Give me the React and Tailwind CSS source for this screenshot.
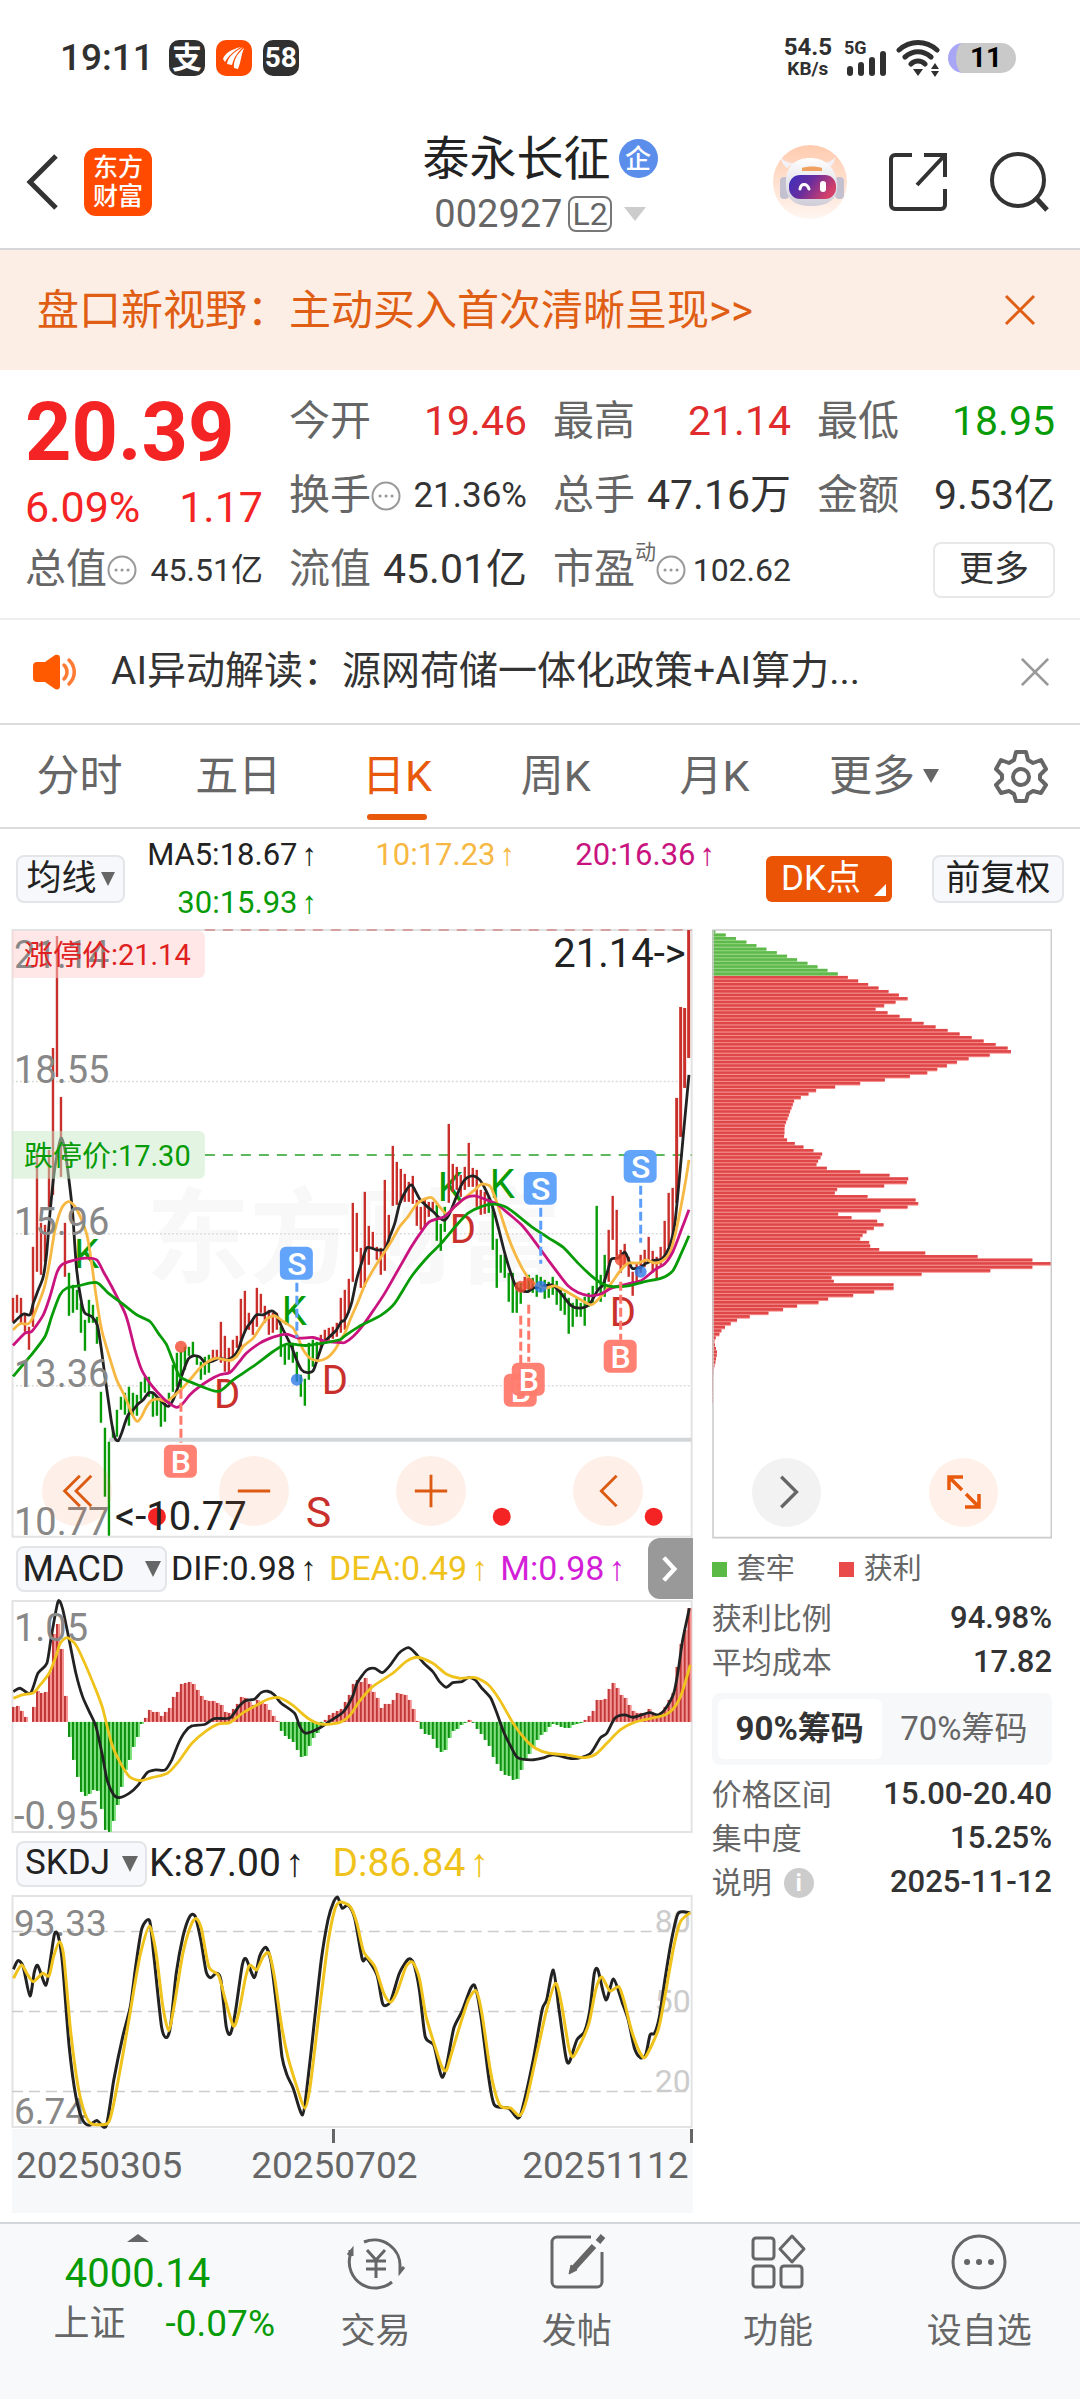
import React from "react";

const UP = "#c9302c";
const DOWN = "#079b07";

/* ---------- chart data ---------- */

// [direction, high, low] per trading day, in chart units
const candles = [
  "r,1298,1322", "r,1295,1313", "r,1298,1325", "r,1313,1332", "r,1327,1350", "r,1247,1327", "r,1153,1272", "r,1223,1275",
  "r,1225,1262", "r,1150,1207", "r,1048,1195", "r,936,1077", "r,1097,1177", "r,1223,1277", "g,1273,1316", "g,1285,1313",
  "g,1290,1310", "g,1303,1333", "g,1320,1351", "g,1300,1323", "g,1305,1323", "g,1317,1344", "g,1392,1423", "g,1428,1497",
  "g,1442,1536", "g,1427,1438", "g,1410,1437", "g,1397,1410", "g,1393,1415", "g,1387,1426", "g,1393,1415", "g,1395,1416",
  "g,1382,1400", "g,1377,1393", "g,1377,1397", "g,1392,1417", "g,1397,1416", "g,1400,1427", "g,1403,1422", "g,1393,1407",
  "g,1365,1392", "g,1353,1387", "g,1352,1388", "g,1347,1370", "g,1347,1356", "g,1342,1357", "g,1357,1365", "g,1362,1380",
  "g,1357,1375", "g,1355,1373", "r,1350,1362", "r,1350,1358", "r,1322,1363", "r,1336,1372", "r,1348,1373", "r,1340,1360",
  "r,1336,1348", "r,1299,1347", "r,1291,1333", "r,1313,1330", "r,1320,1335", "r,1288,1327", "r,1294,1313", "r,1306,1323",
  "r,1310,1335", "r,1313,1333", "r,1313,1330", "g,1327,1357", "g,1345,1365", "g,1343,1360", "g,1343,1363", "g,1352,1382",
  "g,1375,1397", "g,1379,1406", "g,1343,1380", "g,1340,1367", "g,1342,1360", "r,1335,1350", "r,1330,1340", "r,1328,1340",
  "r,1327,1339", "r,1323,1337", "r,1298,1333", "r,1290,1330", "r,1279,1313", "r,1203,1282", "r,1213,1252", "r,1248,1288",
  "r,1192,1287", "r,1226,1265", "r,1232,1248", "r,1247,1260", "r,1248,1275", "r,1180,1271", "r,1215,1243", "r,1146,1206",
  "r,1162,1205", "r,1169,1203", "r,1174,1202", "r,1182,1202", "r,1176,1204", "r,1200,1226", "r,1207,1230", "r,1200,1228",
  "r,1202,1217", "r,1202,1210", "g,1205,1241", "g,1224,1251", "g,1207,1232", "r,1124,1203", "r,1164,1192", "r,1167,1190",
  "r,1175,1197", "r,1167,1190", "r,1143,1187", "r,1168,1187", "r,1170,1207", "r,1190,1215", "r,1192,1214", "g,1197,1213",
  "g,1207,1250", "g,1239,1288", "g,1255,1273", "g,1255,1278", "g,1273,1302", "g,1273,1313", "g,1283,1313", "g,1283,1304",
  "r,1277,1293", "g,1275,1292", "g,1278,1293", "g,1275,1297", "g,1277,1292", "g,1280,1299", "g,1282,1298", "g,1277,1295",
  "g,1281,1305", "g,1290,1311", "g,1293,1315", "g,1298,1334", "g,1303,1327", "g,1298,1317", "g,1303,1317", "g,1297,1326",
  "g,1293,1307", "g,1286,1305", "g,1206,1290", "g,1275,1302", "g,1255,1297", "r,1230,1282", "r,1196,1240", "r,1210,1257",
  "r,1250,1273", "r,1244,1267", "r,1257,1277", "r,1272,1296", "r,1263,1282", "r,1255,1273", "r,1250,1267", "r,1237,1263",
  "r,1251,1273", "r,1257,1279", "r,1247,1265", "r,1221,1257", "r,1193,1247", "r,1188,1237", "r,1098,1203", "r,1007,1137",
  "r,1008,1088", "r,930,1058",
];

const macdBars = [
  15, 16, 11, 5, 0, 15, 31, 29, 30, 50, 88, 98, 73, 26, -15, -38, -55, -70, -74, -72, -68, -69, -87, -108, -110, -99, -83,
  -65, -48, -38, -25, -15, -2, 4, 12, 10, 10, 6, 10, 14, 25, 30, 38, 39, 40, 38, 32, 26, 22, 21, 21, 19, 17, 10, 9, 13, 18,
  25, 24, 20, 17, 22, 20, 18, 12, 6, 1, -9, -14, -17, -20, -28, -35, -34, -24, -16, -11, -5, 2, 7, 9, 11, 13, 20, 27, 38,
  42, 40, 44, 38, 30, 24, 14, 18, 18, 22, 29, 28, 27, 22, 13, 1, -7, -12, -13, -17, -26, -30, -28, -16, -9, -7, -3, -1, 2,
  -1, -7, -12, -18, -24, -35, -42, -49, -53, -54, -58, -57, -48, -38, -32, -25, -18, -13, -10, -5, -2, -3, -5, -6, -6, -3,
  -2, -1, 2, 6, 11, 22, 22, 23, 33, 39, 34, 27, 24, 17, 11, 9, 9, 8, 13, 9, 8, 10, 15, 22, 29, 55, 78, 92, 114,
];

const chips = [
  10, 41, 72, 103, 133, 163, 194, 225, 255, 286, 316, 346, 377, 407, 438, 468, 499, 529, 560, 586, 550, 516, 490, 526, 562,
  598, 634, 670, 706, 742, 778, 814, 850, 886, 896, 832, 769, 734, 704, 675, 645, 593, 518, 444, 369, 312, 289, 266, 246,
  242, 238, 234, 230, 226, 222, 218, 217, 217, 216, 225, 248, 274, 304, 330, 325, 318, 313, 344, 444, 532, 588, 584, 516,
  375, 368, 466, 610, 618, 586, 505, 378, 418, 495, 514, 485, 463, 451, 444, 471, 474, 501, 639, 796, 960, 1018, 960, 834,
  628, 358, 365, 544, 544, 486, 423, 348, 319, 255, 213, 169, 113, 75, 56, 39, 28, 22, 11, 7, 9, 12, 15, 14, 12, 10, 7, 5,
  4, 3, 3, 3, 3, 2, 2, 2, 2,
];

// Turns "x,y x,y ..." samples into a smooth path in chart units.
function samples(text, ox, oy, kx, ky) {
  return text.split(" ").map((p) => {
    const [x, y] = p.split(",").map(Number);
    return [ox + x / kx, oy + y / ky];
  });
}
function smooth(p) {
  let d = `M${p[0][0].toFixed(1)} ${p[0][1].toFixed(1)}`;
  for (let i = 0; i < p.length - 1; i++) {
    const a = p[i - 1] || p[i];
    const b = p[i];
    const c = p[i + 1];
    const e = p[i + 2] || c;
    const t = 8;
    d += `C${(b[0] + (c[0] - a[0]) / t).toFixed(1)} ${(b[1] + (c[1] - a[1]) / t).toFixed(1)} ${(c[0] - (e[0] - b[0]) / t).toFixed(1)} ${(c[1] - (e[1] - b[1]) / t).toFixed(1)} ${c[0].toFixed(1)} ${c[1].toFixed(1)}`;
  }
  return d;
}
const early = (t) => samples(t, 0, 1180, 3, 3);
const late = (t) => samples(t, 345, 1040, 3, 3);
const macdLine = (t) => smooth(samples(t, 0, 1530, 2.24, 3));
const skdjLine = (t) => smooth(samples(t, 0, 1830, 2.24, 3));

const ma5 = smooth([
  ...early("39,430 60,410 72,402 90,405 100,370 115,330 130,290 140,220 150,100 160,0"),
  [57, 1155], [61, 1138], [65, 1150],
  ...early("207,0 218,100 230,270 245,370 255,400 275,410 292,435 303,500 315,590 325,660 335,730 345,775 355,783 365,760 375,730 385,705 400,690 415,672 430,660 445,640 460,640 475,655 490,670 505,680 520,660 535,620 550,575 565,538 580,528 600,532 615,548 635,545 660,535 680,540 700,530 715,510 725,480 740,445 755,425 770,405 790,405 815,393 830,405 845,440 860,470 875,500 890,540 905,570 920,578 940,573 955,530 970,490 990,470 1010,450 1025,425"),
  ...late("0,840 20,790 35,720 50,670 65,625 80,625 95,630 120,628 135,590 150,550 165,490 185,450 200,435 210,450 225,478 245,498 265,515 285,535 300,541 315,520 335,470 350,435 365,415 385,408 405,420 420,445 440,490 460,560 480,640 500,705 515,742 530,752 550,755 565,745 590,740 620,735 640,750 660,775 680,798 705,805 725,800 740,785 760,750 775,735 790,690 800,658 820,655 840,637 850,655 862,685 885,683 905,670 925,662 950,658 965,640 978,610 990,555 1000,460 1010,350 1022,220 1033,105"),
]);
const ma10 = smooth([
  ...early("39,450 60,432 85,432 100,410 120,360 135,315 150,240 165,150 185,85 205,65 225,80 245,120 262,170 275,250 290,360 305,450 325,520 350,600 375,650 395,700 412,725 425,710 440,680 455,662 475,658 500,665 520,650 545,628 570,600 600,565 625,545 650,535 690,542 710,530 730,500 760,475 780,445 800,418 825,408 850,425 880,445 895,475 910,510 930,535 955,543 980,535 1005,510 1025,475"),
  ...late("0,880 20,830 40,785 60,735 85,690 110,650 135,612 165,560 190,530 210,500 230,482 260,473 280,495 305,522 330,500 365,470 390,450 410,433 435,438 450,470 470,530 490,590 510,640 535,690 560,725 600,745 630,738 660,752 700,775 740,795 770,768 800,730 825,695 850,670 880,670 905,660 930,670 955,662 975,640 990,590 1005,520 1020,440 1033,360"),
]);
const ma20 = smooth([
  ...early("39,497 75,460 95,455 130,405 150,350 170,280 185,255 215,243 255,235 290,240 310,275 335,320 375,400 390,450 405,510 425,570 450,610 475,640 500,665 530,683 550,670 570,645 600,620 630,600 660,585 690,578 715,550 740,520 780,490 820,472 860,463 895,475 940,473 980,485 1020,488"),
  ...late("0,908 25,890 50,862 80,820 120,760 160,690 200,620 230,575 255,545 300,530 330,500 360,475 390,468 420,478 455,492 490,520 530,555 570,605 610,660 640,700 670,738 700,758 735,768 770,762 800,745 850,732 890,722 930,690 960,672 985,635 1010,570 1033,510"),
]);
const ma30 = smooth([
  ...early("39,590 90,530 135,470 155,410 180,345 200,325 235,318 290,308 325,340 365,370 410,405 450,425 475,460 500,495 520,545 540,590 580,610 655,635 700,600 760,560 820,515 860,493 920,497 970,490 1020,480"),
  ...late("0,888 40,862 110,825 150,790 200,710 250,650 290,610 330,562 370,520 410,500 450,493 480,500 510,520 560,560 610,593 655,622 700,670 740,708 770,730 800,740 850,738 900,725 950,715 985,692 1010,640 1033,588"),
]);

const dif = macdLine("30,485 45,475 68,490 85,430 105,400 115,320 130,215 140,235 155,330 170,430 185,500 200,545 215,590 230,680 240,750 255,795 268,803 290,790 310,765 330,728 350,720 370,720 385,690 400,640 415,605 430,588 460,583 480,566 515,564 535,530 550,512 570,508 585,488 600,484 615,495 630,520 660,550 672,590 685,610 715,595 740,573 770,545 790,500 800,460 822,420 840,415 857,428 875,405 895,368 915,353 930,368 950,400 970,425 985,455 1000,472 1015,458 1035,455 1050,443 1065,450 1080,475 1100,505 1115,555 1130,610 1145,650 1160,683 1190,690 1215,685 1240,675 1280,686 1305,682 1325,668 1345,625 1360,610 1378,565 1400,555 1420,562 1455,548 1475,555 1492,535 1510,490 1520,420 1530,330 1545,235");
const dea = macdLine("30,505 50,495 75,488 90,465 110,430 125,380 135,340 150,323 170,345 190,400 215,480 230,535 250,640 270,700 290,740 315,752 340,743 375,730 400,695 430,640 460,605 490,582 515,578 545,548 580,522 600,508 625,503 655,525 690,565 720,583 760,578 785,555 805,515 835,470 880,430 910,395 935,382 970,400 1000,432 1030,445 1065,443 1095,465 1120,510 1150,580 1175,625 1200,655 1230,670 1270,675 1310,683 1335,673 1360,640 1390,600 1420,578 1460,565 1490,555 1510,535 1525,500 1535,460 1547,405");
const kLine = skdjLine("30,418 40,392 52,410 67,498 77,425 85,407 103,466 113,390 122,312 130,315 140,400 155,650 170,800 185,870 200,886 217,872 238,888 255,750 275,620 292,530 305,400 318,295 335,272 345,380 362,590 373,623 382,590 395,430 410,320 425,260 437,258 450,330 462,425 472,443 485,430 495,450 507,590 516,612 527,550 543,405 552,388 570,443 582,378 596,352 608,400 620,530 632,680 643,735 657,775 678,855 690,750 705,570 720,390 735,270 748,215 757,202 767,235 780,225 795,265 812,388 822,385 845,435 858,522 875,515 895,430 915,388 927,400 940,480 953,620 972,645 985,720 992,742 1002,700 1017,595 1035,545 1055,475 1065,470 1078,560 1095,740 1108,825 1140,835 1160,865 1170,840 1195,690 1215,540 1225,510 1240,420 1252,530 1268,680 1276,697 1293,630 1310,605 1322,540 1332,430 1340,420 1358,510 1375,447 1395,520 1408,570 1422,655 1435,683 1447,675 1457,615 1467,610 1478,560 1490,450 1505,330 1520,250 1547,248");
const dLine = skdjLine("30,445 48,405 60,430 75,455 95,430 110,437 120,380 133,335 143,380 158,600 175,770 190,850 205,882 240,882 250,850 265,750 285,600 300,480 315,370 335,288 350,370 365,530 378,602 390,530 410,370 428,285 440,266 452,300 468,410 490,437 505,510 523,588 535,550 550,445 560,405 575,420 590,380 603,370 615,440 630,580 645,680 665,770 683,835 695,770 715,550 735,340 750,240 762,216 785,230 800,280 815,365 840,410 860,490 875,517 890,485 910,410 925,397 940,445 955,560 975,650 990,710 1000,722 1012,670 1030,590 1050,510 1067,483 1080,550 1100,730 1120,825 1145,835 1165,857 1180,810 1205,660 1225,540 1245,460 1258,520 1275,655 1285,680 1305,630 1320,580 1335,480 1348,440 1367,483 1387,470 1400,520 1415,600 1435,670 1447,680 1475,600 1490,500 1510,350 1525,275 1547,248");

/* ---------- small parts ---------- */

const Up = () => <span className="ml-1 font-['Liberation_Sans']">↑</span>;

const Caret = ({ className }) => (
  <svg viewBox="0 0 14 12" preserveAspectRatio="none" className={className} fill="currentColor" aria-hidden="true">
    <path d="M0 0h14L7 12z" />
  </svg>
);

const Dots = () => (
  <svg viewBox="0 0 30 30" className="h-[30px] w-[30px] shrink-0" fill="none" stroke="#999" strokeWidth="2" aria-hidden="true">
    <circle cx="15" cy="15" r="13.5" />
    <path d="M9 15h.1M15 15h.1M21 15h.1" strokeWidth="3" strokeLinecap="round" />
  </svg>
);

const Cross = ({ className }) => (
  <svg viewBox="0 0 32 32" className={className} fill="none" stroke="currentColor" strokeWidth="3" aria-hidden="true">
    <path d="M2 2l28 28M30 2L2 30" />
  </svg>
);

function Marker({ x, y, letter, from, to, dot, blue }) {
  const c = blue ? "#5b9ffb" : "#ff7a6b";
  return (
    <g>
      <path d={`M${x} ${from}V${to}`} stroke={c} strokeWidth="3" strokeDasharray="9 4" />
      <circle cx={x} cy={dot} r="6" fill={blue ? "#2f7be8" : "#f0492f"} fillOpacity="0.8" />
      <rect x={x - 17} y={y - 17} width="33" height="33" rx="6" fill={c} fillOpacity="0.95" />
      <text x={x} y={y + 11} textAnchor="middle" fontSize="32" fontWeight="500" fill="#fff">{letter}</text>
    </g>
  );
}

function PriceChart() {
  return (
    <svg viewBox="12 929 681 609" className="block h-auto w-full overflow-visible font-['Roboto','Noto_Sans_CJK_SC',sans-serif]" role="img" aria-label="日K线图">
      <text x="146" y="1275" fontSize="104" fontWeight="700" fill="#f8f8f8">东方财富</text>
      <path d="M12 1081.5H692M12 1234H692M12 1386H692" stroke="#dcdcdc" strokeWidth="1.5" strokeDasharray="2 2" />
      <path d="M12.5 930V1537H692V930Z" fill="none" stroke="#e3e3e3" strokeWidth="2" />
      <path d="M205 930H692" stroke="#d08a8a" strokeWidth="1.5" strokeDasharray="10 8" />
      <path d="M205 1155H692" stroke="#5cb85c" strokeWidth="2" strokeDasharray="10 8" />
      <path d="M109 1440H692" stroke="#d3d6d9" strokeWidth="4" />
      <g fontSize="40" fill={DOWN}>
        <text x="74" y="1268">K</text>
        <text x="282" y="1325">K</text>
        <text x="438" y="1201">K</text>
        <text x="490" y="1198">K</text>
      </g>
      <g fontSize="40" fill={UP}>
        <text x="214" y="1408">D</text>
        <text x="322" y="1394">D</text>
        <text x="450" y="1243">D</text>
        <text x="610" y="1326">D</text>
        <text x="306" y="1527" fontSize="43">S</text>
      </g>
      {candles.map((c, i) => {
        const [d, hi, lo] = c.split(",");
        return <path key={i} d={`M${13 + i * 4} ${hi}V${lo}`} stroke={d === "r" ? UP : DOWN} strokeWidth={i > 165 ? 3 : 2.4} />;
      })}
      <g fill="none" strokeWidth="2.8" strokeLinejoin="round">
        <path d={ma5} stroke="#222" />
        <path d={ma10} stroke="#f7b843" />
        <path d={ma20} stroke="#c9147f" />
        <path d={ma30} stroke={DOWN} />
      </g>
      <path d="M12 931H199a6 6 0 0 1 6 6V972a6 6 0 0 1-6 6H12Z" fill="#ffd0d0" fillOpacity="0.5" />
      <path d="M12 1131H199a6 6 0 0 1 6 6V1173a6 6 0 0 1-6 6H12Z" fill="#c8eac8" fillOpacity="0.5" />
      <g fontSize="38" fill="#888">
        <text x="14" y="968">21.14</text>
        <text x="14" y="1083">18.55</text>
        <text x="14" y="1235">15.96</text>
        <text x="14" y="1387">13.36</text>
        <text x="14" y="1535">10.77</text>
      </g>
      <text x="24" y="965" fontSize="29" fill="#e02020">涨停价:21.14</text>
      <text x="24" y="1166" fontSize="29" fill={DOWN}>跌停价:17.30</text>
      <text x="686" y="967" fontSize="40" textAnchor="end" fill="#222">21.14-&gt;</text>
      <Marker x={297} y={1264} letter="S" from={1283} to={1338} dot={1380} blue />
      <Marker x={541} y={1189} letter="S" from={1208} to={1264} dot={1287} blue />
      <Marker x={641} y={1167} letter="S" from={1186} to={1243} dot={1272} blue />
      <Marker x={181} y={1462} letter="B" from={1390} to={1443} dot={1347} />
      <Marker x={521} y={1391} letter="B" from={1316} to={1374} dot={1287} />
      <Marker x={529} y={1380} letter="B" from={1305} to={1362} dot={1284} />
      <Marker x={621} y={1357} letter="B" from={1282} to={1340} dot={1260} />
      <g fill="#f42424">
        <circle cx="157" cy="1517" r="9" />
        <circle cx="502" cy="1517" r="9" />
        <circle cx="654" cy="1517" r="9" />
      </g>
      <text x="115" y="1530" fontSize="40" fill="#222">&lt;-10.77</text>
    </svg>
  );
}

function MacdChart() {
  const zero = 1722;
  return (
    <svg viewBox="12 1600 681 233" className="block h-auto w-full overflow-visible font-['Roboto',sans-serif]" role="img" aria-label="MACD">
      <path d="M12.5 1601H692V1832H12.5Z" fill="none" stroke="#e3e3e3" strokeWidth="2" />
      {macdBars.map((h, i) => {
        const y = h > 0 ? zero - h : zero;
        const n = Math.abs(h);
        return (
          <g key={i}>
            <rect x={12 + i * 4} y={y} width="4" height={n} fill={h > 0 ? "#f59292" : "#7be07b"} />
            <rect x={12 + i * 4} y={y} width="2" height={n} fill={h > 0 ? "#c03838" : "#109010"} />
          </g>
        );
      })}
      <g fill="none" strokeWidth="2.8" strokeLinejoin="round">
        <path d={dif} stroke="#222" />
        <path d={dea} stroke="#efc31c" />
      </g>
      <g fontSize="38" fill="#888">
        <text x="14" y="1641">1.05</text>
        <text x="14" y="1829">-0.95</text>
      </g>
    </svg>
  );
}

function SkdjChart() {
  return (
    <svg viewBox="12 1895 681 233" className="block h-auto w-full overflow-visible font-['Roboto',sans-serif]" role="img" aria-label="SKDJ">
      <path d="M12.5 1896H692V2127H12.5Z" fill="none" stroke="#e3e3e3" strokeWidth="2" />
      <path d="M12 1931.5H692M12 2011.5H692M12 2091.5H692" stroke="#ccc" strokeWidth="1.5" strokeDasharray="11 6" />
      <g fontSize="32" fill="#ccc" textAnchor="end">
        <text x="691" y="1932">80</text>
        <text x="691" y="2012">50</text>
        <text x="691" y="2092">20</text>
      </g>
      <g fontSize="37" fill="#888">
        <text x="14" y="1936">93.33</text>
        <text x="14" y="2124">6.74</text>
      </g>
      <g fill="none" strokeWidth="3" strokeLinejoin="round">
        <path d={kLine} stroke="#222" />
        <path d={dLine} stroke="#efc31c" />
      </g>
    </svg>
  );
}

function ChipChart() {
  const step = 3.53;
  return (
    <svg viewBox="711 929 340 609" className="block h-auto w-full" role="img" aria-label="筹码分布">
      {chips.map((w, k) => {
        const green = k < 13;
        const y = 930 + k * step;
        return (
          <g key={k}>
            <rect x="711" y={y} width={w / 3} height={step} fill={green ? "#8fd67c" : "#f58a88"} />
            <rect x="711" y={y} width={w / 3} height="2.5" fill={green ? "#5fb84c" : "#df4648"} />
          </g>
        );
      })}
      <path d="M712 930H1050V1537H712Z" fill="none" stroke="#ccc" strokeWidth="1.6" />
    </svg>
  );
}

/* ---------- page sections ---------- */

function StatusBar() {
  return (
    <div className="flex h-[115px] items-center justify-between pl-[60px] pr-16 text-[#303030]">
      <div className="flex items-center gap-[11px]">
        <span className="mr-1 text-[37px] font-medium">19:11</span>
        <span className="flex h-9 w-9 items-center justify-center rounded-[10px] bg-[#303030] text-[30px] font-bold leading-none text-white">支</span>
        <span className="flex h-9 w-9 items-center justify-center rounded-[10px] bg-[#ff4a00]">
          <svg viewBox="0 0 36 36" className="h-9 w-9" fill="#fff" aria-hidden="true">
            <path d="M7 19C9 13 16 9 25 7c-7 4-12 8-16 15zM11 24c1-7 7-12 16-17-5 5-9 10-11 18zM18 28c-1-7 3-14 10-20-3 7-3 14-6 21z" />
          </svg>
        </span>
        <span className="flex h-9 w-9 items-center justify-center rounded-[10px] bg-[#303030] text-[28px] font-bold leading-none text-white">58</span>
      </div>
      <div className="flex items-center gap-2">
        <div className="mr-1 text-center font-bold leading-[22px]">
          <div className="text-[24px]">54.5</div>
          <div className="text-[19px]">KB/s</div>
        </div>
        <div className="flex flex-col items-start">
          <span className="-mb-1.5 text-[18px] font-bold leading-[18px]">5G</span>
          <svg viewBox="0 0 44 26" className="h-[26px] w-11" fill="#303030" aria-hidden="true">
            <rect x="3" y="15" width="6" height="10" rx="3" />
            <rect x="14" y="11" width="6" height="14" rx="3" />
            <rect x="25" y="6" width="6" height="19" rx="3" />
            <rect x="36" y="0" width="6" height="25" rx="3" />
          </svg>
        </div>
        <svg viewBox="0 0 44 38" className="h-[38px] w-11" fill="none" stroke="#303030" strokeWidth="5" strokeLinecap="round" aria-hidden="true">
          <path d="M3 11C14 1 30 1 41 11M9 18C17 11 27 11 35 18M15 25C19 21 25 21 29 25" />
          <path d="M17 30h10l-5 7zM35 30l4-6 4 6zM35 32h8l-4 6z" fill="#303030" stroke="none" />
        </svg>
        <span className="flex h-[30px] w-[68px] items-center justify-center rounded-full border-l-8 border-[#a9a6f5] bg-[#c9c9c9] text-[28px] font-bold leading-none text-black">11</span>
      </div>
    </div>
  );
}

function Header() {
  return (
    <header className="grid h-[135px] grid-cols-[1fr_auto_1fr] items-center border-b-2 border-[#d5d5da] px-6">
      <div className="flex items-center gap-6">
        <button aria-label="返回">
          <svg viewBox="0 0 36 56" className="h-14 w-9" fill="none" stroke="#333" strokeWidth="5" aria-hidden="true">
            <path d="M32 2L6 28l26 26" />
          </svg>
        </button>
        <span className="flex h-[68px] w-[68px] flex-col items-center justify-center rounded-xl bg-[#ff4a00] text-[25px] font-medium leading-[29px] text-white">
          <span>东方</span>
          <span>财富</span>
        </span>
      </div>
      <div className="flex flex-col items-center gap-1.5 pt-1">
        <h1 className="flex items-center gap-2 text-[47px] leading-[54px] text-[#222]">
          泰永长征
          <span className="flex h-[39px] w-[39px] items-center justify-center rounded-full bg-[#5b8dea] text-[26px] font-medium leading-none text-white">企</span>
        </h1>
        <button className="flex items-center gap-1.5 text-[38px] leading-[44px] text-[#666]">
          002927
          <span className="rounded-lg border-2 border-[#777] px-0.5 text-[32px] leading-[32px]">L2</span>
          <Caret className="ml-1.5 h-3.5 w-[22px] text-[#ccc]" />
        </button>
      </div>
      <div className="flex items-center justify-end gap-10 pr-1.5">
        <button aria-label="智能助手">
          <svg viewBox="0 0 76 76" className="h-[76px] w-[76px]" aria-hidden="true">
            <defs>
              <linearGradient id="halo" x1="0" y1="0" x2="0" y2="1">
                <stop offset="0" stopColor="#ffcbae" />
                <stop offset="1" stopColor="#fff6f1" />
              </linearGradient>
              <linearGradient id="visor" x1="0" y1="0" x2="1" y2="0.4">
                <stop offset="0" stopColor="#3a2fc0" />
                <stop offset="0.5" stopColor="#6a2d9c" />
                <stop offset="1" stopColor="#d3406a" />
              </linearGradient>
              <linearGradient id="shell" x1="0" y1="0" x2="0" y2="1">
                <stop offset="0" stopColor="#fff" />
                <stop offset="1" stopColor="#cfcdd8" />
              </linearGradient>
            </defs>
            <circle cx="38" cy="38" r="37" fill="url(#halo)" />
            <path d="M9 13c0 4 2 8 6 11l7-5c-6 0-10-2-13-6zM63 13c0 4-2 8-6 11l-7-5c6 0 10-2 13-6z" fill="#f3f1f5" />
            <rect x="8" y="33" width="9" height="22" rx="4" fill="#c3c1d0" />
            <rect x="63" y="33" width="9" height="22" rx="4" fill="#c3c1d0" />
            <path d="M14 38C14 22 24 14 38 14s25 8 27 24c2 15-6 24-25 24S13 54 14 38z" fill="url(#shell)" />
            <path d="M30 24c6-2 14-2 20 0v3H30z" fill="#f0a060" />
            <rect x="17" y="31" width="47" height="24" rx="11" fill="url(#visor)" />
            <path d="M28 45c1-6 7-6 9 0" fill="none" stroke="#fff" strokeWidth="3" strokeLinecap="round" />
            <rect x="48" y="37" width="6" height="11" rx="3" fill="#fff" />
          </svg>
        </button>
        <button aria-label="分享">
          <svg viewBox="0 0 60 60" className="h-[60px] w-[60px]" fill="none" stroke="#333" strokeWidth="4" aria-hidden="true">
            <path d="M24 3H7a4 4 0 0 0-4 4v46a4 4 0 0 0 4 4h46a4 4 0 0 0 4-4V37M36 3h21v22M57 3L29 33" />
          </svg>
        </button>
        <button aria-label="搜索">
          <svg viewBox="0 0 62 62" className="h-[62px] w-[62px]" fill="none" stroke="#333" strokeWidth="4" aria-hidden="true">
            <circle cx="30" cy="29" r="26" />
            <path d="M47 46l12 13" strokeWidth="5" />
          </svg>
        </button>
      </div>
    </header>
  );
}

function Stat({ label, info, sup, value, className }) {
  return (
    <div className="flex h-[74px] items-center justify-between whitespace-nowrap">
      <dt className="flex items-center text-[41px] text-[#666]">
        {label}
        {sup && <span className="self-start text-[21px] leading-[26px]">{sup}</span>}
        {info && <Dots />}
      </dt>
      <dd className={className}>{value}</dd>
    </div>
  );
}

function Quote() {
  return (
    <dl className="grid grid-cols-4 gap-x-[26px] border-b-2 border-[#eee] px-[25px] pb-[11px] pt-[15px]">
      <div className="row-span-2 flex flex-col text-[#f42424]">
        <dd className="text-[81px] font-bold leading-[96px]">20.39</dd>
        <dd className="flex justify-between text-[43px] leading-[52px]">
          <span>6.09%</span>
          <span>1.17</span>
        </dd>
      </div>
      <Stat label="今开" value="19.46" className="text-[41px] text-[#e02c2c]" />
      <Stat label="最高" value="21.14" className="text-[41px] text-[#e02c2c]" />
      <Stat label="最低" value="18.95" className="text-[41px] text-[#079b07]" />
      <Stat label="换手" info value="21.36%" className="text-[35px] text-[#333]" />
      <Stat label="总手" value="47.16万" className="text-[41px] text-[#333]" />
      <Stat label="金额" value="9.53亿" className="text-[41px] text-[#333]" />
      <Stat label="总值" info value="45.51亿" className="text-[32px] text-[#333]" />
      <Stat label="流值" value="45.01亿" className="text-[41px] text-[#333]" />
      <Stat label="市盈" sup="动" info value="102.62" className="text-[32px] text-[#333]" />
      <div className="flex items-center justify-end">
        <button className="rounded-lg border-2 border-[#e8e8e8] px-6 text-[35px] leading-[52px] text-[#333]">更多</button>
      </div>
    </dl>
  );
}

const tabs = ["分时", "五日", "日K", "周K", "月K"];

function Tabs() {
  return (
    <nav className="flex h-[104px] items-stretch border-b-2 border-[#ddd] text-[43px] text-[#666]">
      {tabs.map((t) => (
        <button key={t} className={t === "日K" ? "relative flex-1 text-[#e8590c]" : "flex-1"}>
          {t}
          {t === "日K" && <span className="absolute bottom-[7px] left-1/2 h-1.5 w-[60px] -translate-x-1/2 rounded-full bg-[#e8590c]" />}
        </button>
      ))}
      <button className="flex w-[180px] items-center justify-center gap-2">
        更多
        <Caret className="h-3.5 w-4" />
      </button>
      <button className="flex w-[106px] items-center justify-center pr-3" aria-label="设置">
        <svg viewBox="0 0 54 54" className="h-[54px] w-[54px]" fill="none" stroke="#666" strokeWidth="4" strokeLinejoin="round" aria-hidden="true">
          <path d="M22 3h10l2 8 5 3 8-3 5 9-6 6v4l6 6-5 8-8-2-5 3-2 7H22l-2-7-5-3-8 2-5-8 6-6v-4l-6-6 5-9 8 3 5-3z" />
          <circle cx="27" cy="28" r="8" />
        </svg>
      </button>
    </nav>
  );
}

const pill = "flex items-center justify-center rounded-lg border-2 border-[#e3e5e9] bg-[#f7f8fb] text-[#222]";

function Averages() {
  return (
    <div className="flex h-[100px] items-center px-4">
      <button className={`${pill} h-12 w-[109px] gap-1 text-[35px]`}>
        均线
        <Caret className="h-3.5 w-3.5 text-[#666]" />
      </button>
      <div className="grid grid-cols-[192px_198px_200px] text-right text-[31px] leading-[48px]">
        <span className="text-[#222]">MA5:18.67<Up /></span>
        <span className="text-[#f7b843]">10:17.23<Up /></span>
        <span className="text-[#c9147f]">20:16.36<Up /></span>
        <span className="text-[#079b07]">30:15.93<Up /></span>
      </div>
      <button className="relative ml-auto h-[46px] w-[126px] rounded-md bg-[#eb5405] pr-4 text-[35px] leading-[46px] text-white">
        DK点
        <svg viewBox="0 0 12 12" className="absolute bottom-1.5 right-1.5 h-3 w-3" fill="#fff" aria-hidden="true">
          <path d="M12 0v12H0z" />
        </svg>
      </button>
      <button className={`${pill} ml-10 h-12 w-[132px] text-[35px]`}>前复权</button>
    </div>
  );
}

const tools = [
  { name: "快退", d: "M24 5L8 21l16 16M36 5L20 21l16 16" },
  { name: "缩小", d: "M4 21h34" },
  { name: "放大", d: "M4 21h34M21 4v34" },
  { name: "后退", d: "M30 5L14 21l16 16" },
];

function MainCharts() {
  return (
    <div className="min-w-0">
      <div className="relative">
        <PriceChart />
        <div className="absolute bottom-3 left-0 flex w-full justify-between pl-[30px] pr-[50px]">
          {tools.map((t) => (
            <button key={t.name} aria-label={t.name} className="flex h-[70px] w-[70px] items-center justify-center rounded-full bg-[#f26a1b]/10">
              <svg viewBox="0 0 42 42" className="h-10 w-10" fill="none" stroke="#dc5a12" strokeWidth="3" aria-hidden="true">
                <path d={t.d} />
              </svg>
            </button>
          ))}
        </div>
      </div>
      <div className="flex h-[62px] items-center whitespace-nowrap pl-1 text-[34px]">
        <button className={`${pill} mr-1 h-[46px] w-[151px] gap-5 text-[36px]`}>
          MACD
          <Caret className="h-4 w-4 text-[#666]" />
        </button>
        <span className="text-[#222]">DIF:0.98<Up /></span>
        <span className="ml-3 text-[#efc31c]">DEA:0.49<Up /></span>
        <span className="ml-3 text-[#d41fd8]">M:0.98<Up /></span>
        <button aria-label="展开" className="ml-auto flex h-[61px] w-[45px] items-center justify-center rounded-l-xl bg-[#999]">
          <svg viewBox="0 0 20 32" className="h-7 w-[18px]" fill="none" stroke="#fff" strokeWidth="5" aria-hidden="true">
            <path d="M3 3l12 13L3 29" />
          </svg>
        </button>
      </div>
      <MacdChart />
      <div className="flex h-[62px] items-center whitespace-nowrap pl-1 text-[39px]">
        <button className={`${pill} mr-0.5 h-[46px] w-[131px] gap-3 text-[35px]`}>
          SKDJ
          <Caret className="h-4 w-4 text-[#666]" />
        </button>
        <span className="text-[#222]">K:87.00<Up /></span>
        <span className="ml-7 text-[#efc31c]">D:86.84<Up /></span>
      </div>
      <SkdjChart />
      <div className="mt-0.5 h-[84px] bg-[#f7f8fa]">
        <div className="grid grid-cols-[323px_1fr]">
          <span className="h-3.5 border-r-3 border-[#666]" />
          <span className="h-3.5 border-r-3 border-[#666]" />
        </div>
        <div className="flex items-center justify-between pl-1 pr-1 pt-0.5 text-[37px] leading-[42px] text-[#666]">
          <span>20250305</span>
          <span className="mr-9">20250702</span>
          <span>20251112</span>
        </div>
      </div>
    </div>
  );
}

function Row({ label, value, info }) {
  return (
    <div className="flex h-11 items-center justify-between">
      <dt className="flex items-center gap-3 text-[30px] text-[#666]">
        {label}
        {info && <span className="flex h-[30px] w-[30px] items-center justify-center rounded-full bg-[#ccc] text-[24px] font-bold leading-none text-white">i</span>}
      </dt>
      <dd className="text-[31px] font-medium text-[#333]">{value}</dd>
    </div>
  );
}

function ChipPanel() {
  return (
    <aside className="min-w-0">
      <div className="relative">
        <ChipChart />
        <div className="absolute bottom-3 left-0 flex w-full justify-between pl-10 pr-[54px]">
          <button aria-label="下一页" className="flex h-[69px] w-[69px] items-center justify-center rounded-full bg-[#f2f2f2]">
            <svg viewBox="0 0 42 42" className="h-10 w-10" fill="none" stroke="#666" strokeWidth="3.5" aria-hidden="true">
              <path d="M16 5l16 16-16 16" />
            </svg>
          </button>
          <button aria-label="全屏" className="flex h-[69px] w-[69px] items-center justify-center rounded-full bg-[#fff1e9]">
            <svg viewBox="0 0 36 36" className="h-9 w-9" fill="none" stroke="#e8590c" strokeWidth="3.5" aria-hidden="true">
              <path d="M3 16V3h14M3 3l13 13M33 20v13H19M33 33L20 20" />
            </svg>
          </button>
        </div>
      </div>
      <div className="flex h-[58px] items-center pt-1 text-[29px] text-[#666]">
        <span className="mr-2.5 h-[15px] w-[15px] bg-[#5aba45]" />
        套牢
        <span className="ml-11 mr-2.5 h-[15px] w-[15px] bg-[#e94b4b]" />
        获利
      </div>
      <dl>
        <Row label="获利比例" value="94.98%" />
        <Row label="平均成本" value="17.82" />
      </dl>
      <div className="my-2 grid h-[72px] grid-cols-2 rounded-lg bg-[#f7f8fa] p-1.5 text-[33px] text-[#666]">
        <button className="rounded-md bg-white font-bold text-[#333]">90%筹码</button>
        <button>70%筹码</button>
      </div>
      <dl>
        <Row label="价格区间" value="15.00-20.40" />
        <Row label="集中度" value="15.25%" />
        <Row label="说明" info value="2025-11-12" />
      </dl>
    </aside>
  );
}

const actions = [
  {
    name: "交易",
    art: (
      <>
        <path d="M18 8a26 26 0 0 1 36 26v3M46 48A26 26 0 0 1 4 22v-6M2 21l4-5v6M58 33l-4 5v-6" transform="translate(0 2)" />
        <path d="M21 18l9 10 9-10M20 29h20M20 37h20M30 28v18" strokeWidth="3" />
      </>
    ),
  },
  {
    name: "发帖",
    art: (
      <>
        <path d="M44 5H10a5 5 0 0 0-5 5v40a5 5 0 0 0 5 5h40a5 5 0 0 0 5-5V20" />
        <path d="M51 10l5-6M47 14L27 36" strokeWidth="6" />
        <path d="M22 42l2-9 6 5z" fill="#666" strokeWidth="1" />
      </>
    ),
  },
  {
    name: "功能",
    art: (
      <>
        <rect x="5" y="6" width="21" height="21" rx="3" />
        <rect x="5" y="34" width="21" height="21" rx="3" />
        <rect x="33" y="34" width="21" height="21" rx="3" />
        <path d="M44 4l12 13-12 13-12-13z" strokeLinejoin="round" />
      </>
    ),
  },
  {
    name: "设自选",
    art: (
      <>
        <circle cx="30" cy="30" r="26" />
        <path d="M18 30h.1M30 30h.1M42 30h.1" strokeWidth="6" strokeLinecap="round" />
      </>
    ),
  },
];

function BottomBar() {
  return (
    <nav className="mt-[9px] grid h-[177px] grid-cols-[275px_repeat(4,1fr)] border-t-2 border-[#d3d6da] bg-[#f7f9fb] text-[#666]">
      <button className="flex flex-col items-center pt-2.5">
        <Caret className="h-2 w-[22px] rotate-180" />
        <span className="mt-2 text-[40px] leading-[48px] text-[#079b07]">4000.14</span>
        <span className="mt-0.5 flex gap-10 self-end text-[36px] leading-[48px]">
          <span>上证</span>
          <span className="text-[37px] text-[#079b07]">-0.07%</span>
        </span>
      </button>
      {actions.map((a) => (
        <button key={a.name} className="flex flex-col items-center pt-2">
          <svg viewBox="0 0 60 60" className="h-[60px] w-[60px]" fill="none" stroke="#666" strokeWidth="3" aria-hidden="true">
            {a.art}
          </svg>
          <span className="mt-3.5 text-[35px] leading-[52px]">{a.name}</span>
        </button>
      ))}
    </nav>
  );
}

export default function App() {
  return (
    <div className="bg-white font-['Roboto','Noto_Sans_CJK_SC',sans-serif]">
      <StatusBar />
      <Header />
      <div className="flex h-[120px] items-center justify-between bg-[#fceee5] pl-[37px] pr-11 text-[42px] text-[#e05e14]">
        <a href="#board">盘口新视野：主动买入首次清晰呈现&gt;&gt;</a>
        <button aria-label="关闭提示">
          <Cross className="h-8 w-8" />
        </button>
      </div>
      <Quote />
      <div className="flex h-[105px] items-center border-b-2 border-[#ddd] pl-[33px] pr-[30px] text-[39px] text-[#333]">
        <svg viewBox="0 0 46 36" className="mr-8 h-9 w-[46px]" fill="#ff5a00" aria-hidden="true">
          <path d="M4 8h8L22 1c3-1 5 0 5 3v28c0 3-2 4-5 3l-10-7H4c-3 0-4-2-4-4V12c0-2 1-4 4-4z" />
          <path d="M31 11c4 4 4 10 0 14M36 6c7 7 7 17 0 24" fill="none" stroke="#ff7a33" strokeWidth="3.5" strokeLinecap="round" />
        </svg>
        <a href="#insight">AI异动解读：源网荷储一体化政策+AI算力...</a>
        <button aria-label="关闭" className="ml-auto text-[#999]">
          <Cross className="h-[30px] w-[30px]" />
        </button>
      </div>
      <Tabs />
      <Averages />
      <main className="grid grid-cols-[2fr_1fr] gap-x-[19px] pl-3 pr-7">
        <MainCharts />
        <ChipPanel />
      </main>
      <BottomBar />
    </div>
  );
}
